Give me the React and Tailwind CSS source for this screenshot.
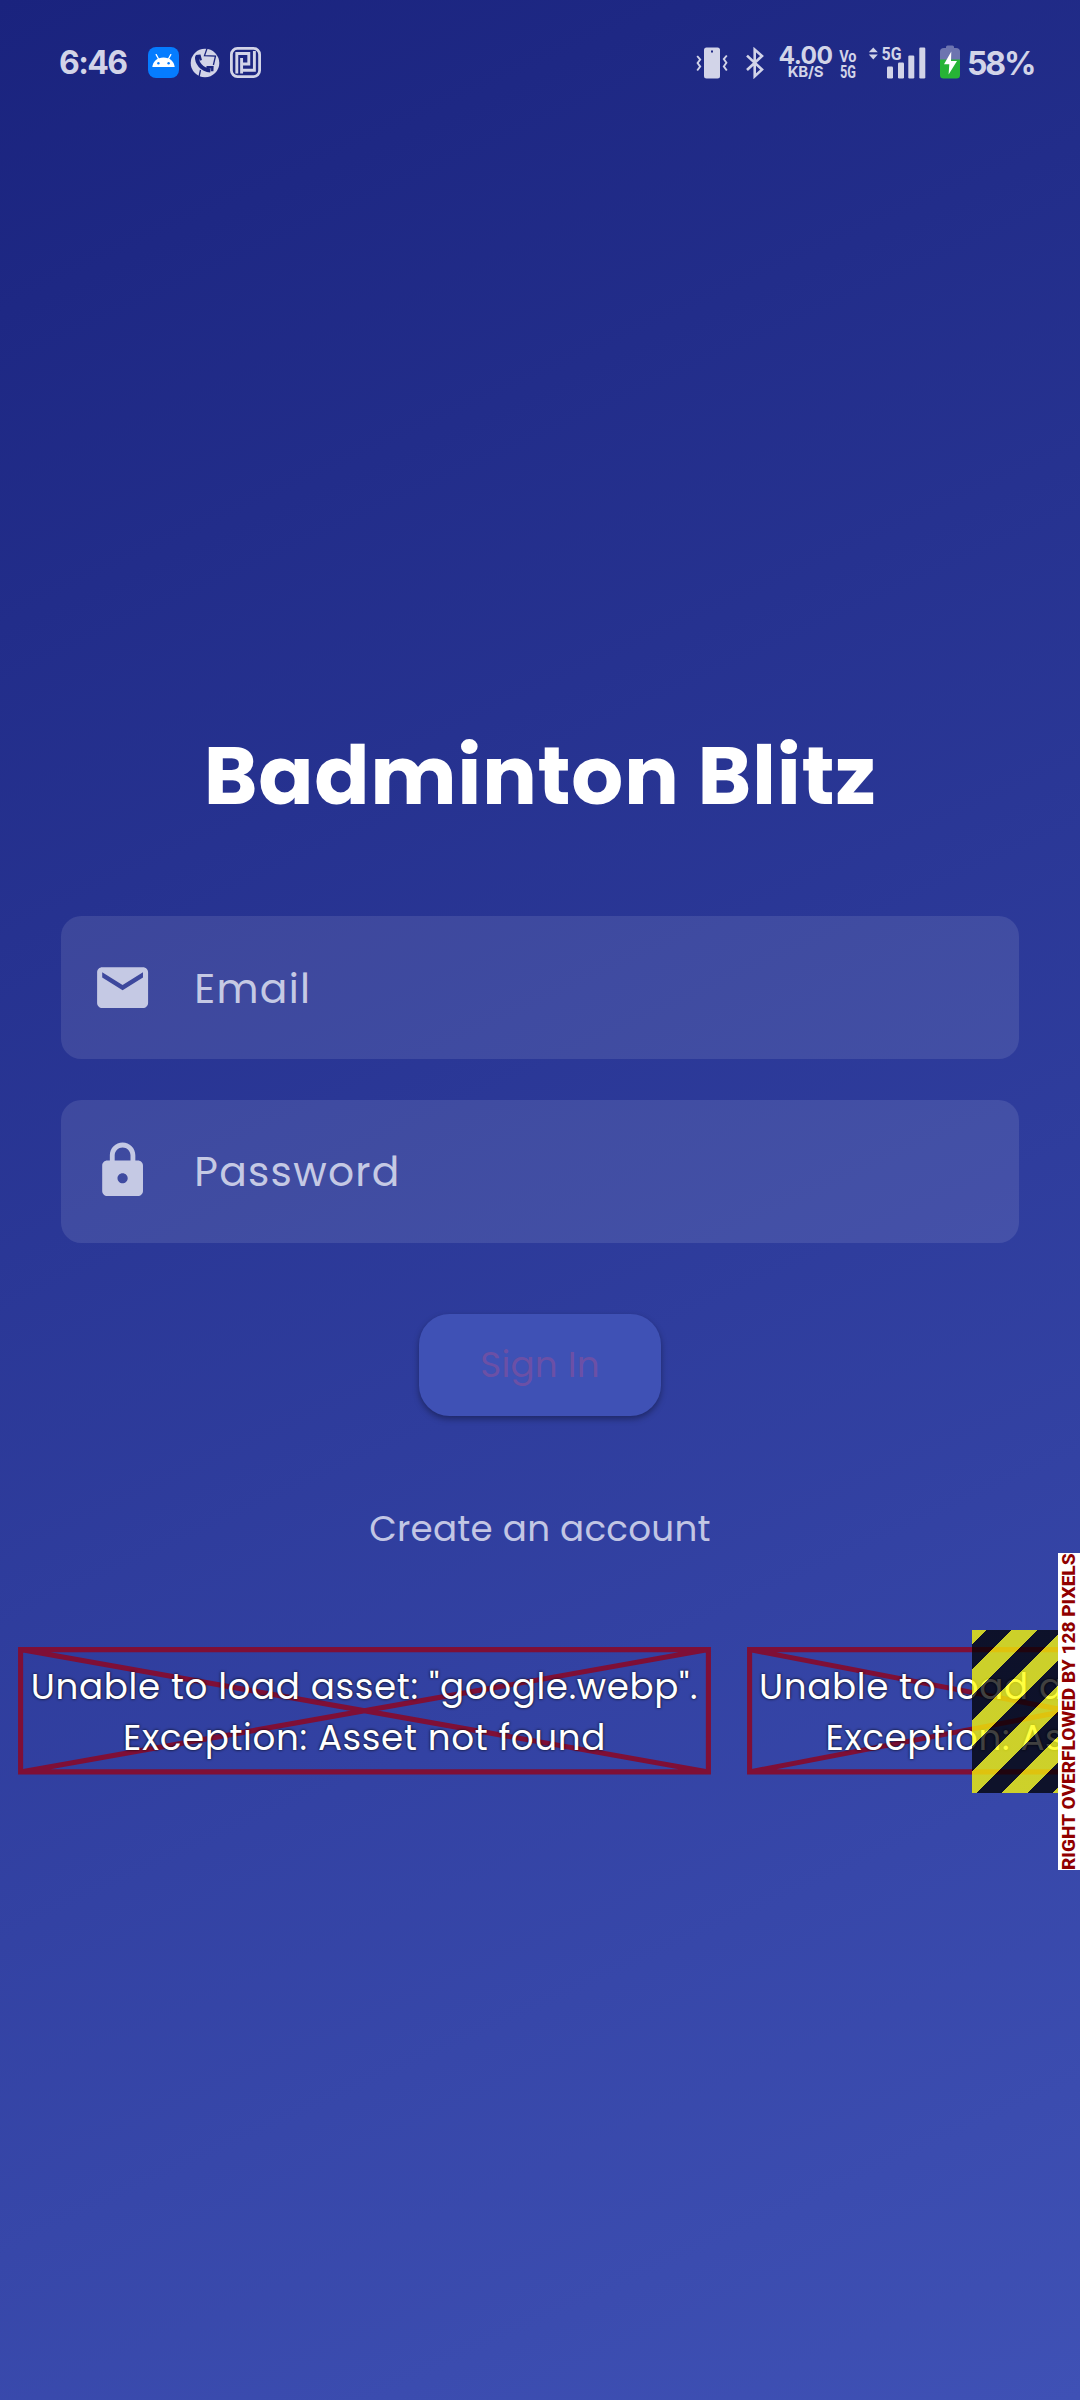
function AndroidIcon() {
  return (
    <div className="flex h-[31px] w-[31px] items-center justify-center rounded-[8px] bg-[#057cff]">
      <svg width="23" height="14" viewBox="0 0 23 14" className="mb-1">
        <path d="M0.3 13C0.8 7.6 5 3.4 11.5 3.4S22.2 7.6 22.7 13Z" fill="#fff" />
        <path d="M4.2 0.6 6.6 5M18.8 0.6 16.4 5" stroke="#fff" strokeWidth="1.3" strokeLinecap="round" />
        <circle cx="6.4" cy="9.2" r="1.2" fill="#057cff" />
        <circle cx="16.6" cy="9.2" r="1.2" fill="#057cff" />
      </svg>
    </div>
  );
}

function CallIcon() {
  return (
    <svg width="30" height="30" viewBox="0 0 30 30">
      <circle cx="15" cy="15" r="14.3" fill="#d2d4e8" />
      <g fill="none" stroke="#1b257f">
        <path d="M7 8.5C6.5 15 11.5 21.5 20.5 22.5" strokeWidth="4" />
        <path d="M5.8 8.2 9.6 7.8 10.8 12.4M16.5 19.3 22.4 19.2 22.2 23.2" strokeWidth="2.4" />
        <path d="M17 0.5 14.5 7.6 25.5 8 23.4 17M10.5 22 9 29" strokeWidth="1.3" />
      </g>
    </svg>
  );
}

function MazeIcon() {
  return (
    <svg width="31" height="31" viewBox="0 0 31 31" fill="none">
      <rect x="1.4" y="1.4" width="28.2" height="28.2" rx="6" stroke="#d2d4e8" strokeWidth="2.8" />
      <path d="M6.8 26.5V6.5H18.8V17H11.6M24.4 4V23.2H11.6M11.6 11V26.5" stroke="#d2d4e8" strokeWidth="2.9" />
    </svg>
  );
}

function VibrateIcon() {
  return (
    <svg width="32" height="32" viewBox="0 0 32 32">
      <rect x="8" y="0.5" width="16" height="31" rx="2.5" fill="#d2d4e8" />
      <rect x="15" y="3.5" width="2" height="2" fill="#1e2883" />
      <path d="M1.2 9 4.2 12.6 1.6 16 4.2 19.6 1.2 23.5M30.8 8.5 27.8 12.1 30.4 15.8 27.8 19.4 30.8 23.5" fill="none" stroke="#d2d4e8" strokeWidth="1.9" />
    </svg>
  );
}

function BluetoothIcon() {
  return (
    <svg width="18" height="32" viewBox="0 0 18 32">
      <path d="M1 8.6 16 22.6 8.7 29.3V2.6L16 9 1 23" fill="none" stroke="#d2d4e8" strokeWidth="2.6" />
    </svg>
  );
}

function VoiceIcon() {
  return (
    <svg className="ml-[6px] overflow-visible" width="18" height="32" viewBox="0 0 18 32" fill="#d2d4e8" fontFamily="Roboto, sans-serif" fontWeight="700">
      <text x="0.2" y="15" fontSize="17" textLength="17.4" lengthAdjust="spacingAndGlyphs">Vo</text>
      <text x="1" y="30.5" fontSize="18" textLength="16" lengthAdjust="spacingAndGlyphs">5G</text>
    </svg>
  );
}

function SignalIcon() {
  return (
    <svg className="overflow-visible" width="57" height="32" viewBox="0 0 57 32" fill="#d2d4e8">
      <path d="M4.3 0.5 8.8 5.2H-0.2ZM4.3 12.4 8.8 7.5H-0.2Z" />
      <text x="12.5" y="13.2" fontFamily="Roboto, sans-serif" fontWeight="700" fontSize="18" textLength="20" lengthAdjust="spacingAndGlyphs">5G</text>
      <rect x="18" y="19.5" width="6" height="12" rx="1.2" />
      <rect x="29" y="15.5" width="6" height="16" rx="1.2" />
      <rect x="39.3" y="8.5" width="6" height="23" rx="1.2" />
      <rect x="50.3" y="0.5" width="6" height="31" rx="1.2" />
    </svg>
  );
}

function BatteryIcon() {
  return (
    <svg width="20" height="34" viewBox="0 0 20 34">
      <path d="M6 3V2Q6 0.5 7.5 0.5H12.5Q14 0.5 14 2V3H16Q20 3 20 6.5V15H0V6.5Q0 3 4 3Z" fill="#6d74b0" />
      <path d="M0 14.5H20V30Q20 33.5 16.5 33.5H3.5Q0 33.5 0 30Z" fill="#27b436" />
      <path d="M11.3 6.5 4 19.2H9.3L8.6 29.5 17 16H11Z" fill="#fff" />
    </svg>
  );
}

function StatusBar() {
  return (
    <div className="flex h-[125px] items-center justify-between pr-[45px] pl-[59px] font-[Inter,sans-serif] text-[#d2d4e8]">
      <div className="flex items-center">
        <span className="w-[89px] text-[32px] font-[650] tracking-[-1.6px]">6:46</span>
        <AndroidIcon />
        <div className="ml-[11px]"><CallIcon /></div>
        <div className="ml-[10px]"><MazeIcon /></div>
      </div>
      <div className="flex items-center">
        <VibrateIcon />
        <div className="ml-[18px]"><BluetoothIcon /></div>
        <div className="mb-[2px] ml-[14px] flex w-[55px] flex-col items-center">
          <span className="text-[24.5px] leading-[20px] font-bold tracking-[-0.6px]">4.00</span>
          <span className="text-[15px] leading-[13px] font-bold tracking-[-0.2px]">KB/S</span>
        </div>
        <VoiceIcon />
        <div className="ml-[12px]"><SignalIcon /></div>
        <div className="mb-[2px] ml-[14px]"><BatteryIcon /></div>
        <span className="mt-[2px] ml-[7px] w-[68px] text-[32px] font-[650] tracking-[-2.2px]">58%</span>
      </div>
    </div>
  );
}

function MailIcon() {
  return (
    <svg className="mt-px" width="61.2" height="61.2" viewBox="0 0 24 24" fill="currentColor">
      <path d="M20 4H4c-1.1 0-1.99.9-1.99 2L2 18c0 1.1.9 2 2 2h16c1.1 0 2-.9 2-2V6c0-1.1-.9-2-2-2zm0 4l-8 5-8-5V6l8 5 8-5v2z" />
    </svg>
  );
}

function LockIcon() {
  return (
    <svg width="61.2" height="61.2" viewBox="0 0 24 24" fill="currentColor">
      <path d="M18 8h-1V6c0-2.76-2.24-5-5-5S7 3.24 7 6v2H6c-1.1 0-2 .9-2 2v10c0 1.1.9 2 2 2h12c1.1 0 2-.9 2-2V10c0-1.1-.9-2-2-2zm-6 9c-1.1 0-2-.9-2-2s.9-2 2-2 2 .9 2 2-.9 2-2 2zm3.1-9H8.9V6c0-1.71 1.39-3.1 3.1-3.1 1.71 0 3.1 1.39 3.1 3.1v2z" />
    </svg>
  );
}

function Field({ icon, children }) {
  return (
    <div className="flex h-[143px] items-center gap-[41.5px] rounded-[20.4px] bg-white/10 pl-[30.6px] text-[40.8px] tracking-[1.275px] text-[#c5c9e4]">
      {icon}
      {children}
    </div>
  );
}

function ErrorText({ message }) {
  return (
    <div className="relative flex flex-col items-center pt-[14px] text-[35.7px] leading-[51px] tracking-[0.64px] whitespace-nowrap text-white [text-shadow:0_0_3px_#000]">
      <span>{message}</span>
      <span>Exception: Asset not found</span>
    </div>
  );
}

export default function App() {
  return (
    <div className="relative flex h-[2400px] w-[1080px] flex-col overflow-hidden bg-[linear-gradient(155.77deg,#1a237e,#3f51b5)] font-[Poppins,Inter,sans-serif]">
      <StatusBar />
      <main className="flex flex-col items-center">
        <h1 className="mt-[588px] text-[81.6px] leading-[126px] font-bold tracking-[0.64px] whitespace-nowrap text-white">Badminton Blitz</h1>
        <form className="mt-[76.5px] flex w-[958px] flex-col gap-[41px]">
          <Field icon={<MailIcon />}><span className="mt-[3px]">Email</span></Field>
          <Field icon={<LockIcon />}><span className="mt-px">Password</span></Field>
        </form>
        <button className="mt-[71px] h-[102px] w-[242px] rounded-[30.6px] bg-[#3f51b5] text-[35.7px] tracking-[0.255px] text-[#6b50a6] shadow-[0_3px_6px_rgba(0,0,0,0.35)]">Sign In</button>
        <a className="mt-[87px] text-[35.7px] leading-[51px] tracking-[0.255px] text-[#c2c6e4]">Create an account</a>
      </main>
      <div className="relative mt-[76px] flex h-[163px] items-center gap-[35.5px] pl-[18px]">
        <div className="relative h-[127.5px] w-[693px] shrink-0">
          <svg className="absolute inset-0" width="693" height="128" viewBox="0 0 693 128" fill="none" stroke="#7f0f36" strokeWidth="5.1">
            <path d="M2.6 2.6H690.4V124.9H2.6ZM2.6 2.6 690.4 124.9M690.4 2.6 2.6 124.9" />
          </svg>
          <ErrorText message={'Unable to load asset: "google.webp".'} />
        </div>
        <div className="relative h-[127.5px] w-[641px] shrink-0">
          <svg className="absolute inset-0" width="641" height="128" viewBox="0 0 641 128" fill="none" stroke="#7f0f36" strokeWidth="5.1">
            <path d="M2.6 2.6H638.4V124.9H2.6ZM2.6 2.6 638.4 124.9M638.4 2.6 2.6 124.9" />
          </svg>
          <ErrorText message={'Unable to load asset: "apple.png".'} />
        </div>
        <div className="absolute top-0 right-0 h-[163.5px] w-[108px] bg-[repeating-linear-gradient(135deg,rgba(255,255,0,0.75)_0px,rgba(255,255,0,0.75)_10px,rgba(0,0,0,0.75)_10px,rgba(0,0,0,0.75)_28.03px,rgba(255,255,0,0.75)_28.03px,rgba(255,255,0,0.75)_36.06px)]" />
        <div className="absolute top-[-76.5px] right-0 flex h-[317px] w-[22px] rotate-180 items-center justify-center bg-white font-[Roboto,sans-serif] text-[19.125px] leading-[22px] font-extrabold whitespace-nowrap text-[#900000] [writing-mode:vertical-rl]">RIGHT OVERFLOWED BY 128 PIXELS</div>
      </div>
    </div>
  );
}
